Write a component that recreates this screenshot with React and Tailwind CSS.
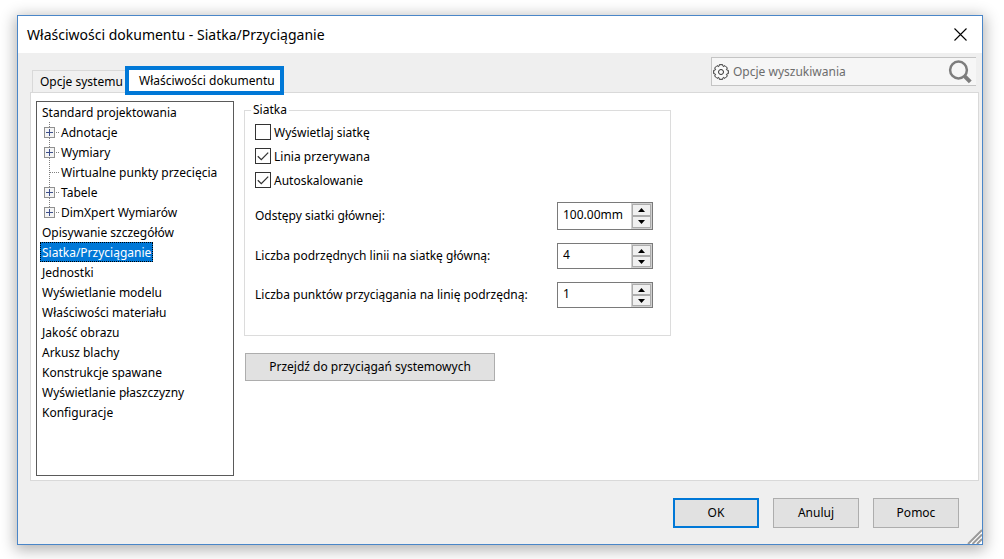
import { useState } from "react";

const TREE = [
  { label: "Standard projektowania" },
  { label: "Adnotacje", child: true, expandable: true },
  { label: "Wymiary", child: true, expandable: true },
  { label: "Wirtualne punkty przecięcia", child: true },
  { label: "Tabele", child: true, expandable: true },
  { label: "DimXpert Wymiarów", child: true, expandable: true, last: true },
  { label: "Opisywanie szczegółów" },
  { label: "Siatka/Przyciąganie" },
  { label: "Jednostki" },
  { label: "Wyświetlanie modelu" },
  { label: "Właściwości materiału" },
  { label: "Jakość obrazu" },
  { label: "Arkusz blachy" },
  { label: "Konstrukcje spawane" },
  { label: "Wyświetlanie płaszczyzny" },
  { label: "Konfiguracje" },
];

function Branch({ expandable, last }) {
  return (
    <svg className="h-5 w-[17px] shrink-0" viewBox="0 0 17 20" shapeRendering="crispEdges" aria-hidden="true">
      <path d={last ? "M7.5 0V10" : "M7.5 0V20"} stroke="#808080" strokeDasharray="1 1" />
      <path d="M8 10.5H17" stroke="#808080" strokeDasharray="1 1" />
      {expandable && (
        <>
          <rect x="2.5" y="5.5" width="10" height="10" fill="#f4f4f4" stroke="#919191" />
          <path d="M4 10.5H11M7.5 7V14" stroke="#3c4f8c" fill="none" />
        </>
      )}
    </svg>
  );
}

function Tree() {
  const [selected, setSelected] = useState("Siatka/Przyciąganie");
  return (
    <ul className="w-[198px] shrink-0 border border-[#5a5a5a] bg-white px-[3px]">
      {TREE.map((item) => (
        <li key={item.label} className="flex h-5 items-center">
          {item.child && (
            <span className="flex pl-[2px]">
              <Branch expandable={item.expandable} last={item.last} />
            </span>
          )}
          <button
            type="button"
            onClick={() => setSelected(item.label)}
            className={
              selected === item.label
                ? "h-5 border border-dotted border-black bg-[#0078d7] px-px leading-5 whitespace-nowrap text-white"
                : "h-5 border border-transparent px-px leading-5 whitespace-nowrap"
            }
          >
            {item.label}
          </button>
        </li>
      ))}
    </ul>
  );
}

function Check({ label, defaultChecked }) {
  return (
    <label className="flex h-4 items-center gap-[3px] self-start leading-[18px]">
      <span className="grid size-4 place-items-center">
        <input
          type="checkbox"
          defaultChecked={defaultChecked}
          className="peer col-start-1 row-start-1 size-4 appearance-none border border-[#333] bg-white"
        />
        <svg className="pointer-events-none col-start-1 row-start-1 hidden size-4 peer-checked:block" viewBox="0 0 16 16" aria-hidden="true">
          <path d="M2.8 8.2L6.3 11.6L13.2 4.6" fill="none" stroke="#333" strokeWidth="1.3" />
        </svg>
      </span>
      <span className="pt-0.5">{label}</span>
    </label>
  );
}

function Stepper({ id, label, initial, step, decimals, unit, tall }) {
  const [value, setValue] = useState(initial);
  const change = (d) => {
    const n = Math.max(0, (parseFloat(value) || 0) + d * step);
    setValue(n.toFixed(decimals) + unit);
  };
  return (
    <div className="flex items-center justify-between">
      <label htmlFor={id}>{label}</label>
      <div className={tall ? "flex h-7 w-24 border border-[#7a7a7a] bg-white" : "flex h-[26px] w-24 border border-[#7a7a7a] bg-white"}>
        <input
          id={id}
          type="text"
          value={value}
          onChange={(e) => setValue(e.target.value)}
          className="min-w-0 flex-1 pb-0.5 pl-[5px] outline-none"
        />
        <div className="flex w-[21px] flex-col border border-[#d0d0d0] bg-[#e8e8e8]">
          <button type="button" aria-label="Zwiększ" onClick={() => change(1)} className="grid flex-1 place-items-center border border-[#acacac] bg-[#f0f0f0]">
            <svg className="h-1 w-[7px]" viewBox="0 0 7 4"><path d="M0 4L3.5 0L7 4Z" /></svg>
          </button>
          <button type="button" aria-label="Zmniejsz" onClick={() => change(-1)} className="grid flex-1 place-items-center border border-[#acacac] bg-[#f0f0f0]">
            <svg className="h-1 w-[7px]" viewBox="0 0 7 4"><path d="M0 0L3.5 4L7 0Z" /></svg>
          </button>
        </div>
      </div>
    </div>
  );
}

// Eight teeth, each a flat top between two valleys.
const GEAR_PATH =
  "M" +
  Array.from({ length: 8 }, (_, i) =>
    [
      [-20, 6],
      [-13, 7.5],
      [13, 7.5],
      [20, 6],
    ].map(([offset, r]) => {
      const a = ((i * 45 + offset) * Math.PI) / 180;
      return `${(8 + r * Math.cos(a)).toFixed(2)} ${(8 + r * Math.sin(a)).toFixed(2)}`;
    })
  )
    .flat()
    .join("L") +
  "Z";

function GearIcon() {
  return (
    <svg className="size-4 shrink-0" viewBox="0 0 16 16" fill="none" stroke="#303030" strokeLinejoin="round" aria-hidden="true">
      <path fill="#fafafa" d={GEAR_PATH} />
      <circle cx="8" cy="8" r="2.5" />
    </svg>
  );
}

export default function App() {
  return (
    <div className="flex min-h-screen bg-white pt-[15px] pr-[21px] pb-[14px] pl-[17px] font-['Noto_Sans','Open_Sans',sans-serif] text-[12px] leading-4 text-black">
      <main className="flex flex-1 flex-col border border-[#4a86c8] bg-[#efefef] shadow-[0_3px_14px_2px_rgba(0,0,0,0.3)]">
        <header className="flex h-[37px] items-center justify-between bg-white pr-[15px] pl-[9px]">
          <h1 className="text-[14px]">Właściwości dokumentu - Siatka/Przyciąganie</h1>
          <button type="button" aria-label="Zamknij">
            <svg className="size-[13px]" viewBox="0 0 13 13" aria-hidden="true">
              <path d="M.5 .5L12.5 12.5M12.5 .5L.5 12.5" stroke="#000" strokeWidth="1.1" />
            </svg>
          </button>
        </header>

        <div className="flex h-[39px] items-start justify-between pr-[6px] pl-[14px]">
          <div role="tablist" className="flex h-full items-end">
            <button type="button" role="tab" aria-selected="false" className="h-[22px] w-[93px] border border-r-0 border-b-0 border-[#d9d9d9] bg-[#f0f0f0] pl-[7px] text-left whitespace-nowrap">
              Opcje systemu
            </button>
            <button type="button" role="tab" aria-selected="true" className="z-10 -mb-[3px] h-[29px] w-[159px] border-4 border-[#0078d7] bg-white pl-[10px] text-left whitespace-nowrap">
              Właściwości dokumentu
            </button>
          </div>
          <form role="search" onSubmit={(e) => e.preventDefault()} className="mt-1 flex h-[29px] w-[265px] items-center border border-r-0 border-[#c4c4c4] bg-[#f6f6f6] pr-1 pl-px">
            <GearIcon />
            <input type="text" aria-label="Opcje wyszukiwania" placeholder="Opcje wyszukiwania" className="min-w-0 flex-1 bg-transparent pl-1 outline-none placeholder:text-[#6d6d6d]" />
            <button type="submit" aria-label="Szukaj">
              <svg className="size-6" viewBox="0 0 24 24" fill="none" stroke="#7d7d7d" aria-hidden="true">
                <circle cx="10.5" cy="10" r="8.4" strokeWidth="2.5" />
                <path d="M16.8 16.3L22.3 21.8" strokeWidth="4" />
              </svg>
            </button>
          </form>
        </div>

        <section className="mr-[3px] ml-3 flex flex-1 items-stretch border border-[#d9d9d9] bg-white pr-2 pb-1 pl-[5px]">
          <div className="flex pt-2">
            <Tree />
          </div>
          <div className="ml-[10px] flex w-[427px] flex-col items-start pt-[7px]">
            <fieldset className="w-full border border-[#dcdcdc] pr-[17px] pb-[27px] pl-[10px]">
              <legend className="-ml-1 px-[2px] leading-5">Siatka</legend>
              <div className="flex flex-col gap-2 pt-1">
                <Check label="Wyświetlaj siatkę" />
                <Check label="Linia przerywana" defaultChecked />
                <Check label="Autoskalowanie" defaultChecked />
              </div>
              <div className="flex flex-col gap-[13px] pt-[14px]">
                <Stepper id="main-spacing" label="Odstępy siatki głównej:" initial="100.00mm" step={10} decimals={2} unit="mm" tall />
                <Stepper id="minor-lines" label="Liczba podrzędnych linii na siatkę główną:" initial="4" step={1} decimals={0} unit="" />
                <Stepper id="snap-points" label="Liczba punktów przyciągania na linię podrzędną:" initial="1" step={1} decimals={0} unit="" />
              </div>
            </fieldset>
            <button type="button" className="mt-[17px] ml-px h-7 w-[250px] border border-[#adadad] bg-[#e1e1e1]">
              Przejdź do przyciągań systemowych
            </button>
          </div>
        </section>

        <footer className="flex h-[63px] justify-end gap-[14px] pt-[17px]">
          <button type="button" className="h-[30px] w-[86px] border-2 border-[#0078d7] bg-[#e1e1e1]">OK</button>
          <button type="button" className="h-[30px] w-[86px] border border-[#adadad] bg-[#e1e1e1]">Anuluj</button>
          <button type="button" className="h-[30px] w-[86px] border border-[#adadad] bg-[#e1e1e1]">Pomoc</button>
          <svg className="-ml-[6px] size-[15px] self-end" viewBox="0 0 15 15" aria-hidden="true">
            <path d="M0 15L15 0V15Z" fill="#fff" />
            <path d="M1 15L15 1M5.5 15L15 5.5M10 15L15 10" stroke="#9a9a9a" strokeWidth="2" />
          </svg>
        </footer>
      </main>
    </div>
  );
}
